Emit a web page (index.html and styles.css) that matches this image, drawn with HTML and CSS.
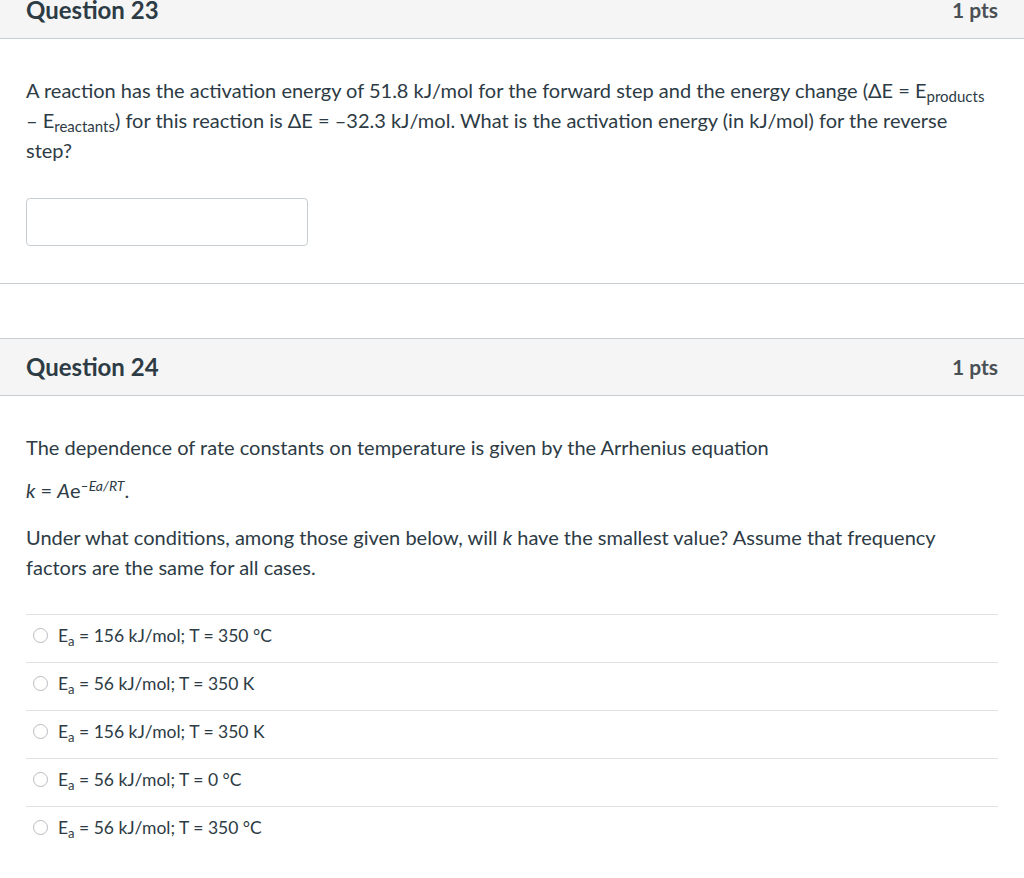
FILE: index.html
```html
<!DOCTYPE html>
<html lang="en">
<head>
<meta charset="utf-8">
<title>Quiz</title>
<link rel="stylesheet" href="styles.css">
</head>
<body>
<div class="page">
  <section class="question first">
    <header class="q-header">
      <h2 class="q-title">Question 23</h2>
      <span class="q-pts">1 pts</span>
    </header>
    <div class="q-body">
      <p class="q-text q-text-a">A reaction has the activation energy of 51.8 kJ/mol for the forward step and the energy change (&#916;E = E<sub>products</sub> &#8211; E<sub>reactants</sub>) for this reaction is &#916;E = &#8211;32.3 kJ/mol. What is the activation energy (in kJ/mol) for the reverse step?</p>
      <input class="answer-input" type="text" aria-label="Answer">
    </div>
  </section>
  <hr class="divider">
  <section class="question">
    <header class="q-header">
      <h2 class="q-title">Question 24</h2>
      <span class="q-pts">1 pts</span>
    </header>
    <div class="q-body">
      <p class="q-text p1">The dependence of rate constants on temperature is given by the Arrhenius equation</p>
      <p class="q-text p2"><i>k</i> = <i>A</i>e<sup><i>&#8211;Ea/RT</i></sup>.</p>
      <p class="q-text p3">Under what conditions, among those given below, will <i>k</i> have the smallest value? Assume that frequency factors are the same for all cases.</p>
      <ul class="answers">
        <li class="answer"><span class="radio"></span><span class="a-text">E<sub>a</sub> = 156 kJ/mol; T = 350 °C</span></li>
        <li class="answer"><span class="radio"></span><span class="a-text">E<sub>a</sub> = 56 kJ/mol; T = 350 K</span></li>
        <li class="answer"><span class="radio"></span><span class="a-text">E<sub>a</sub> = 156 kJ/mol; T = 350 K</span></li>
        <li class="answer"><span class="radio"></span><span class="a-text">E<sub>a</sub> = 56 kJ/mol; T = 0 °C</span></li>
        <li class="answer"><span class="radio"></span><span class="a-text">E<sub>a</sub> = 56 kJ/mol; T = 350 °C</span></li>
      </ul>
    </div>
  </section>
</div>
</body>
</html>
```

FILE: styles.css
```css
html, body {
  margin: 0;
  padding: 0;
  background: #ffffff;
}
body {
  font-family: Lato, "Open Sans", "Liberation Sans", sans-serif;
  color: #2d3b45;
  overflow: hidden;
}
.page {
  width: 1024px;
}
.question.first {
  margin-top: -19px;
}
.q-header {
  display: flex;
  justify-content: space-between;
  align-items: center;
  height: 54px;
  padding: 0 26px 2px 26px;
  background: #f5f5f5;
  border-top: 1px solid #c7cdd1;
  border-bottom: 1px solid #c7cdd1;
}
.q-title {
  margin: 0;
  font-size: 24px;
  font-weight: 700;
  color: #2d3b45;
}
.q-pts {
  font-size: 21px;
  font-weight: 700;
  color: #4a5156;
}
.q-body {
  padding: 36px 26px 0 26px;
}
.q-text {
  margin: 0;
  font-size: 20px;
  line-height: 30px;
}
.q-text sub {
  font-size: 15px;
  line-height: 0;
  vertical-align: -4px;
}
.q-text sup {
  font-size: 14px;
  line-height: 0;
  vertical-align: 7px;
}
.answer-input {
  display: block;
  margin-top: 33px;
  width: 282px;
  height: 48px;
  box-sizing: border-box;
  border: 1px solid #c7cdd1;
  border-radius: 4px;
  background: #fff;
}
.divider {
  margin: 37px 0 54px 0;
  border: 0;
  border-top: 1px solid #c7cdd1;
  height: 0;
}
.p1 { margin-bottom: 13px; }
.p2 { margin-bottom: 17px; }
.answers {
  list-style: none;
  margin: 32px 0 0 0;
  padding: 0;
}
.answer {
  display: flex;
  align-items: center;
  height: 41px;
  border-top: 1px solid #dfe2e4;
  padding-left: 7px;
  padding-bottom: 6px;
}
.radio {
  width: 13px;
  height: 13px;
  border: 1px solid #b8bcc0;
  border-radius: 50%;
  margin-right: 10px;
  background: #fff;
}
.a-text {
  font-size: 17.5px;
}
.a-text sub {
  font-size: 13px;
  line-height: 0;
  vertical-align: -4px;
}
```
